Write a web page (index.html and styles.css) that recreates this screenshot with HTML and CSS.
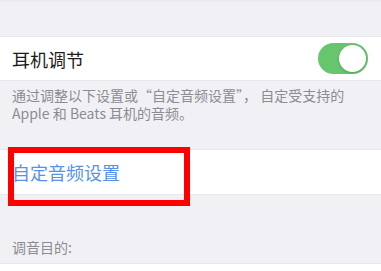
FILE: index.html
```html
<!DOCTYPE html>
<html lang="zh-CN">
<head>
    <meta charset="UTF-8">
    <meta name="viewport" content="width=381, initial-scale=1.0">
    <title>耳机调节</title>
    <link rel="stylesheet" href="styles.css">
</head>
<body>
    <div class="top-gap"></div>

    <div class="cell">
        <span class="cell-title">耳机调节</span>
        <label class="switch">
            <input type="checkbox" checked>
            <span class="slider"></span>
        </label>
    </div>
    <div class="footer-note">
        <p>通过调整以下设置或“自定音频设置”， 自定受支持的</p>
        <p>Apple 和 Beats 耳机的音频。</p>
    </div>

    <div class="cell link-cell">
        <span class="cell-link">自定音频设置</span>
        <div class="highlight"></div>
    </div>

    <div class="section-header">调音目的:</div>
    <div class="cell bottom-cell"></div>
</body>
</html>
```

FILE: styles.css
```css
* {
    margin: 0;
    padding: 0;
    box-sizing: border-box;
}
body {
    width: 381px;
    height: 271px;
    overflow: hidden;
    background: #f1f1f5;
    font-family: "Noto Sans CJK SC", "Noto Sans", sans-serif;
}
.top-gap {
    height: 36px;
    border-top: 2px solid #ebebef;
}
.cell {
    position: relative;
    height: 45px;
    background: #fff;
    display: flex;
    align-items: center;
    justify-content: space-between;
    padding: 0 13px 0 12px;
    border-top: 1px solid #e8e8ec;
    border-bottom: 1px solid #e8e8ec;
}
.cell-title {
    font-size: 18px;
    color: #1c1c1e;
}
.switch {
    position: relative;
    display: inline-block;
    width: 50px;
    height: 31px;
}
.switch input {
    opacity: 0;
    width: 0;
    height: 0;
}
.slider {
    position: absolute;
    inset: 0;
    background: #67c66d;
    border-radius: 16px;
}
.slider:before {
    position: absolute;
    content: "";
    width: 27px;
    height: 27px;
    right: 2px;
    top: 2px;
    background: #fff;
    border-radius: 50%;
    box-shadow: 0 1px 3px rgba(0, 0, 0, 0.2);
}
.footer-note {
    height: 68px;
    padding: 6px 12px 0;
    font-size: 14px;
    line-height: 17.5px;
    color: #8c8c91;
    white-space: nowrap;
}
.link-cell {
    height: 46px;
}
.cell-link {
    font-size: 18px;
    color: #5592ee;
}
.highlight {
    position: absolute;
    left: 8px;
    top: -3px;
    width: 182px;
    height: 59px;
    border: 6px solid #fe0000;
}
.section-header {
    height: 68px;
    display: flex;
    align-items: flex-end;
    padding: 0 12px 7px;
    font-size: 14px;
    line-height: 17px;
    color: #8c8c91;
}
.bottom-cell {
    height: 20px;
    border-bottom: none;
}
```
